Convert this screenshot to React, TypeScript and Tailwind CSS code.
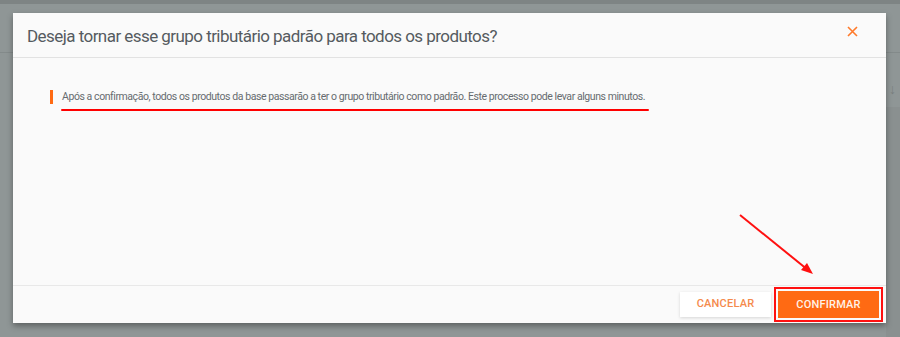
import React from "react";

export default function App() {
  return (
    <div
      className="relative w-[900px] h-[337px] overflow-hidden bg-[#8f9696]"
      style={{ fontFamily: "Roboto, 'Noto Sans', sans-serif" }}
    >
      {/* background page hints */}
      <div className="h-[4px] bg-[#7e8484]" />
      <div className="mt-[48px] h-px bg-[#838a8a]" />
      <div className="absolute right-0 top-[107px] w-[14px] h-[230px] bg-[#8a9090]" />
      <div className="absolute right-[4px] top-[82px] text-[14px] text-[#7a8080] leading-none">↓</div>

      {/* modal */}
      <div className="absolute left-[13px] top-[13px] w-[873px] h-[310px] bg-[#fafafa] flex flex-col shadow-[0_3px_6px_rgba(0,0,0,0.35)]">
        <div className="h-[45px] border-b border-[#e2e2e2] flex items-center justify-between pl-[14px] pr-[28px] shrink-0">
          <h1 className="text-[17px] text-[#555b60] tracking-[-0.55px] mt-[3px]">
            Deseja tornar esse grupo tributário padrão para todos os produtos?
          </h1>
          <svg width="11" height="11" viewBox="0 0 11 11" className="mt-[-8px]">
            <path d="M1 1L10 10M10 1L1 10" stroke="#ff7a2a" strokeWidth="1.6" />
          </svg>
        </div>
        <div className="flex-1 pt-[32px] pl-[37px]">
          <div className="flex items-center gap-[9px]">
            <div className="w-[3px] h-[14px] bg-[#ff6a13]" />
            <p className="text-[10.5px] text-[#666b6f] tracking-[-0.43px] leading-[14px]">
              Após a confirmação, todos os produtos da base passarão a ter o grupo tributário como padrão. Este processo pode levar alguns minutos.
            </p>
          </div>
          <div className="ml-[11px] mt-[5px] w-[588px] h-[2px] bg-[#ff0000] rounded-full" />
        </div>
        <div className="h-[38px] border-t border-[#e8e8e8] flex items-center justify-end pr-[3px] gap-[3px] shrink-0">
          <button className="w-[91px] h-[25px] bg-white shadow-[0_1px_3px_rgba(0,0,0,0.15)] text-[11px] font-medium text-[#f58a4c] tracking-[0.2px]">
            CANCELAR
          </button>
          <div className="border-2 border-[#ff1010] p-[2px]">
            <button className="w-[101px] h-[27px] bg-[#ff6a13] text-[11px] font-medium text-[#fff2e8] tracking-[0.2px]">
              CONFIRMAR
            </button>
          </div>
        </div>
      </div>

      {/* red arrow */}
      <svg className="absolute left-0 top-0 pointer-events-none" width="900" height="337">
        <line x1="740" y1="215" x2="808" y2="270" stroke="#ff1010" strokeWidth="2" />
        <polygon points="813,274 801,270 807,263" fill="#ff1010" />
      </svg>
    </div>
  );
}
